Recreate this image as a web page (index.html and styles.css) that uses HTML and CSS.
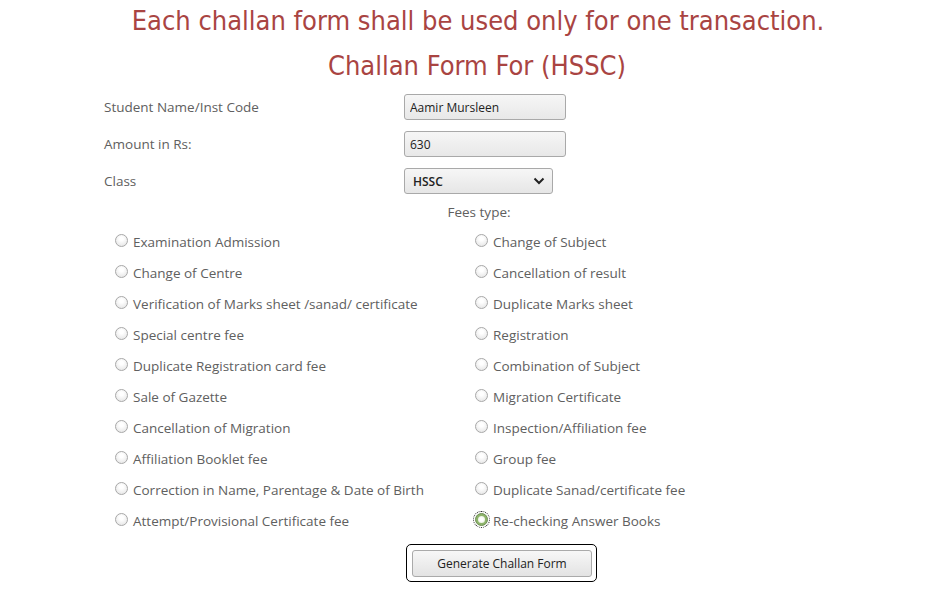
FILE: index.html
```html
<!DOCTYPE html>
<html>
<head>
<meta charset="utf-8">
<link rel="stylesheet" href="styles.css">
</head>
<body>
<h1 class="notice">Each challan form shall be used only for one transaction.</h1>
<h2 class="title">Challan Form For (HSSC)</h2>
<form class="form">
  <div class="field">
    <label class="lbl">Student Name/Inst Code</label>
    <input class="txt" type="text" value="Aamir Mursleen">
  </div>
  <div class="field">
    <label class="lbl">Amount in Rs:</label>
    <input class="txt" type="text" value="630">
  </div>
  <div class="field">
    <label class="lbl">Class</label>
    <div class="sel"><span>HSSC</span>
      <svg width="12" height="8" viewBox="0 0 12 8"><path d="M1.5 1.5 L6 6 L10.5 1.5" fill="none" stroke="#222" stroke-width="2"/></svg>
    </div>
  </div>
  <div class="fees-head">Fees type:</div>
  <div class="opts">
    <label class="opt"><span class="rad"></span>Examination Admission</label>
    <label class="opt"><span class="rad"></span>Change of Subject</label>
    <label class="opt"><span class="rad"></span>Change of Centre</label>
    <label class="opt"><span class="rad"></span>Cancellation of result</label>
    <label class="opt"><span class="rad"></span>Verification of Marks sheet /sanad/ certificate</label>
    <label class="opt"><span class="rad"></span>Duplicate Marks sheet</label>
    <label class="opt"><span class="rad"></span>Special centre fee</label>
    <label class="opt"><span class="rad"></span>Registration</label>
    <label class="opt"><span class="rad"></span>Duplicate Registration card fee</label>
    <label class="opt"><span class="rad"></span>Combination of Subject</label>
    <label class="opt"><span class="rad"></span>Sale of Gazette</label>
    <label class="opt"><span class="rad"></span>Migration Certificate</label>
    <label class="opt"><span class="rad"></span>Cancellation of Migration</label>
    <label class="opt"><span class="rad"></span>Inspection/Affiliation fee</label>
    <label class="opt"><span class="rad"></span>Affiliation Booklet fee</label>
    <label class="opt"><span class="rad"></span>Group fee</label>
    <label class="opt"><span class="rad"></span>Correction in Name, Parentage &amp; Date of Birth</label>
    <label class="opt"><span class="rad"></span>Duplicate Sanad/certificate fee</label>
    <label class="opt"><span class="rad"></span>Attempt/Provisional Certificate fee</label>
    <label class="opt"><span class="rad checked"></span>Re-checking Answer Books</label>
  </div>
  <div class="actions">
    <div class="focus-ring"><button type="button" class="btn">Generate Challan Form</button></div>
  </div>
</form>
</body>
</html>
```

FILE: styles.css
```css
html, body {
  margin: 0;
  padding: 0;
  background: #fff;
}
body {
  font-family: "Open Sans", "Noto Sans", sans-serif;
  color: #606060;
  font-size: 13.5px;
}
.notice, .title {
  font-family: "DejaVu Sans Condensed", "DejaVu Sans", sans-serif;
  font-weight: normal;
  color: #a94442;
  text-align: center;
  font-size: 27px;
  margin: 0;
  line-height: 32px;
}
.notice {
  padding-top: 5px;
  padding-left: 4px;
}
.title {
  margin-top: 13px;
  padding-left: 2px;
}
.form {
  margin: 12px 0 0 0;
  display: flex;
  flex-direction: column;
}
.field {
  display: flex;
  align-items: center;
  height: 26px;
  margin-bottom: 11px;
  padding-left: 104px;
}
.lbl {
  width: 300px;
  line-height: 20px;
}
.txt {
  box-sizing: border-box;
  width: 162px;
  height: 26px;
  margin: 0;
  border: 1px solid #a9a9a9;
  border-radius: 3px;
  background: linear-gradient(#f6f6f6, #e8e8e8);
  font-family: "Open Sans", sans-serif;
  font-size: 12px;
  color: #222;
  padding: 0 5px;
  outline: none;
}
.sel {
  box-sizing: border-box;
  width: 149px;
  height: 26px;
  border: 1px solid #a9a9a9;
  border-radius: 3px;
  background: linear-gradient(#f6f6f6, #e6e6e6);
  display: flex;
  align-items: center;
  justify-content: space-between;
  padding: 0 7px 0 8px;
  font-size: 12px;
  font-weight: 600;
  color: #222;
}
.fees-head {
  text-align: center;
  padding-left: 6px;
  margin-top: -3px;
  line-height: 20px;
}
.opts {
  display: grid;
  grid-template-columns: 360px 360px;
  grid-auto-rows: 31px;
  padding-left: 115px;
  margin-top: 10px;
}
.opt {
  display: flex;
  align-items: center;
  height: 20px;
  line-height: 20px;
}
.rad {
  box-sizing: border-box;
  width: 13px;
  height: 13px;
  border-radius: 50%;
  border: 1px solid #a8a8a8;
  background: radial-gradient(circle at 50% 35%, #ffffff 20%, #e4e4e4 90%);
  margin-right: 5px;
  margin-top: -4px;
  flex: none;
  position: relative;
}
.rad.checked {
  border: 1px solid #6f8f55;
  background: #8db36b;
  outline: 1px dotted #222;
  outline-offset: 1px;
}
.rad.checked::after {
  content: "";
  position: absolute;
  left: 2px;
  top: 2px;
  width: 7px;
  height: 7px;
  border-radius: 50%;
  background: radial-gradient(circle, #ffffff 30%, #dde8cf 100%);
}
.actions {
  display: flex;
  justify-content: flex-start;
  padding-left: 406px;
  margin-top: 2px;
}
.focus-ring {
  border: 1px solid #000;
  border-radius: 5px;
  padding: 5px 4px 4px 5px;
}
.btn {
  box-sizing: border-box;
  width: 180px;
  height: 27px;
  border: 1px solid #aaa;
  border-radius: 3px;
  background: linear-gradient(#f7f7f7, #e3e3e3);
  font-family: "Open Sans", sans-serif;
  font-size: 12px;
  color: #222;
  padding: 0;
}
```
